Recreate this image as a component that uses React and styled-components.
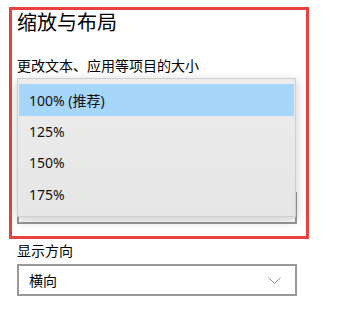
import React from 'react';
import styled, { createGlobalStyle } from 'styled-components';

const GlobalStyle = createGlobalStyle`
  html, body {
    margin: 0;
    padding: 0;
    background: #fff;
  }
  body {
    font-family: "Noto Sans", "Noto Sans CJK SC", sans-serif;
    color: #000;
  }
`;

const Page = styled.div`
  padding: 7px 0 0 9px;
  width: 351px;
  height: 311px;
  box-sizing: border-box;
`;

const Highlight = styled.section`
  width: 300px;
  box-sizing: border-box;
  border: 3px solid #e8413f;
  padding: 0 9px 12px 5px;
  display: flex;
  flex-direction: column;
`;

const Title = styled.h2`
  margin: 0;
  font-size: 20px;
  line-height: 24px;
  font-weight: 400;
  font-family: "Noto Sans CJK SC", sans-serif;
`;

const Label = styled.div`
  font-size: 14px;
  line-height: 20px;
  font-family: "Noto Sans CJK SC", sans-serif;
  margin-top: ${(p) => p.$gap || 0}px;
  padding-left: ${(p) => p.$indent || 0}px;
`;

const Combo = styled.div`
  position: relative;
  height: 32px;
  width: 280px;
  box-sizing: border-box;
  border: 2px solid #999;
  background: #fff;
  margin-top: ${(p) => p.$gap || 0}px;
  margin-left: ${(p) => p.$indent || 0}px;
  display: flex;
  align-items: center;
  justify-content: space-between;
  padding: 0 14px 0 10px;
  font-size: 14px;
  font-family: "Noto Sans CJK SC", sans-serif;
`;

const Popup = styled.ul`
  position: absolute;
  top: -116px;
  bottom: 5px;
  left: -2px;
  right: -1px;
  margin: 0;
  padding: 5px 1px 6px;
  list-style: none;
  background: linear-gradient(180deg, #ececec 0%, #e6e6e6 100%);
  border: 1px solid #cfcfcf;
  box-shadow: 0 3px 10px rgba(0, 0, 0, 0.22);
  display: flex;
  flex-direction: column;
`;

const Item = styled.li`
  height: 31.5px;
  display: flex;
  align-items: center;
  padding-left: 10px;
  font-size: 14px;
  font-family: "Noto Sans", "Noto Sans CJK SC", sans-serif;
  background: ${(p) => (p.$active ? '#a6d6fb' : 'transparent')};
  color: #111;
`;

const Chevron = () => (
  <svg width="13" height="7" viewBox="0 0 13 7">
    <path d="M0.5 0.5 L6.5 6.5 L12.5 0.5" fill="none" stroke="#888" strokeWidth="1" />
  </svg>
);

const sizes = ['100% (推荐)', '125%', '150%', '175%'];

export default function App() {
  return (
    <>
      <GlobalStyle />
      <Page>
        <Highlight>
          <Title>缩放与布局</Title>
          <Label $gap={21}>更改文本、应用等项目的大小</Label>
          <Combo $gap={117}>
            <Popup>
              {sizes.map((s, i) => (
                <Item key={s} $active={i === 0}>{s}</Item>
              ))}
            </Popup>
          </Combo>
        </Highlight>
        <Label $gap={1} $indent={8}>显示方向</Label>
        <Combo $gap={4} $indent={8}>
          <span>横向</span>
          <Chevron />
        </Combo>
      </Page>
    </>
  );
}
